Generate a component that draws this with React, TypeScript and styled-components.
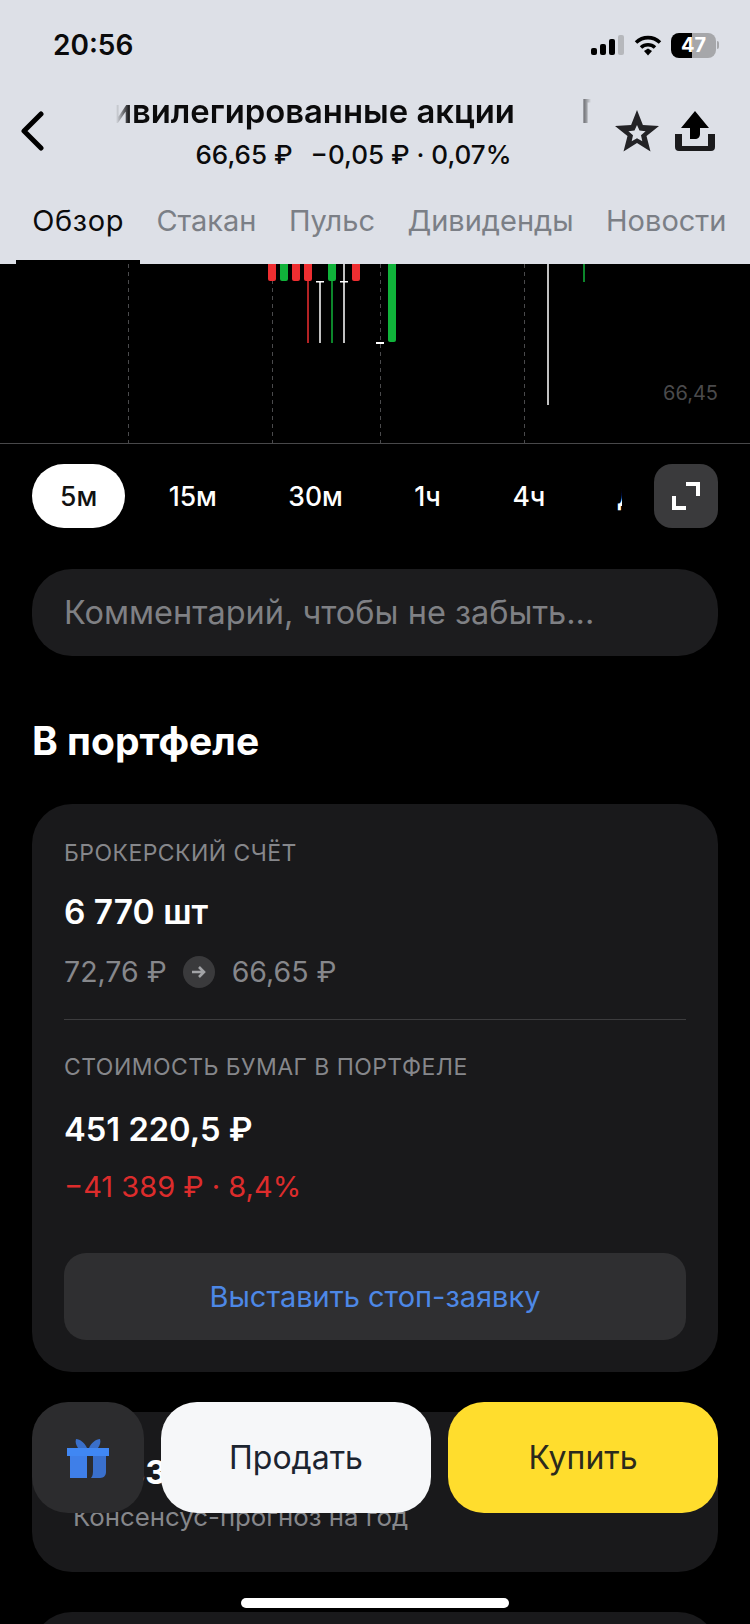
import React, { FC } from "react";
import styled, { createGlobalStyle } from "styled-components";

const GlobalStyle = createGlobalStyle`
	html, body {
		margin: 0;
		padding: 0;
		background: #000;
	}
	* {
		box-sizing: border-box;
	}
`;

const Page = styled.div`
	position: relative;
	width: 750px;
	height: 1624px;
	overflow: hidden;
	background: #000;
	font-family: Inter, "Noto Sans", sans-serif;
	color: #fff;
`;

// header
const Header = styled.header`
	height: 264px;
	background: #dde0e7;
	color: #0b0b0c;
`;

const StatusBar = styled.div`
	height: 90px;
	display: flex;
	align-items: center;
	justify-content: space-between;
	padding: 0 31px 0 53px;
`;

const Time = styled.span`
	font-size: 28px;
	font-weight: 600;
`;

const StatusIcons = styled.div`
	display: flex;
	align-items: center;
	gap: 9px;
`;

const BatteryWrap = styled.div`
	display: flex;
	align-items: center;
	gap: 1px;
`;

const Battery = styled.div`
	width: 45px;
	height: 25px;
	border-radius: 8px;
	overflow: hidden;
	background: linear-gradient(90deg, #000 0 47%, #a6a7aa 47% 100%);
	color: #fff;
	font-size: 20px;
	font-weight: 700;
	line-height: 25px;
	text-align: center;
`;

const BatteryNub = styled.span`
	width: 2px;
	height: 8px;
	border-radius: 0 2px 2px 0;
	background: #a6a7aa;
`;

const NavRow = styled.div`
	height: 82px;
	display: flex;
	align-items: center;
	padding-left: 20px;
`;

const TitleBlock = styled.div`
	width: 475px;
	margin: 0 24px 0 72px;
	display: flex;
	flex-direction: column;
	align-items: center;
`;

const TitleClip = styled.div`
	width: 100%;
	height: 40px;
	overflow: hidden;
	-webkit-mask-image: linear-gradient(90deg, transparent 0, #000 14px, #000 calc(100% - 14px), transparent 100%);
	mask-image: linear-gradient(90deg, transparent 0, #000 14px, #000 calc(100% - 14px), transparent 100%);
`;

const TitleTrack = styled.div`
	display: flex;
	gap: 66px;
	margin-left: -49px;
	white-space: nowrap;
	font-size: 32.8px;
	font-weight: 600;
	line-height: 40px;
`;

const Subtitle = styled.div`
	margin-top: 8px;
	display: flex;
	gap: 18px;
	font-size: 26px;
	font-weight: 500;
	line-height: 32px;
	white-space: nowrap;
`;

const NavActions = styled.div`
	display: flex;
	align-items: center;
	gap: 16px;
`;

const Tabs = styled.nav`
	display: flex;
	padding-left: 16px;
	white-space: nowrap;
`;

const Tab = styled.div<{ $active?: boolean }>`
	padding: 32px 16.2px 22px;
	font-size: 29px;
	line-height: 34px;
	letter-spacing: ${(p) => (p.$active ? "0.6px" : "0")};
	color: ${(p) => (p.$active ? "#0b0b0c" : "#7b7f86")};
	border-bottom: 4px solid ${(p) => (p.$active ? "#000" : "transparent")};
`;

// chart
const ChartWrap = styled.section`
	position: relative;
	height: 180px;
	border-bottom: 1px solid #48484a;
`;

const ChartLabel = styled.span`
	position: absolute;
	right: 32px;
	top: 116px;
	font-size: 20px;
	line-height: 26px;
	color: #4a4a4c;
`;

// timeframes
const FrameRow = styled.div`
	display: flex;
	align-items: center;
	margin-top: 20px;
	padding: 0 32px;
	gap: 32px;
`;

const FrameScroll = styled.div`
	width: 590px;
	display: flex;
	gap: 15.5px;
	overflow: hidden;
`;

const FramePill = styled.div<{ $active?: boolean }>`
	flex: none;
	height: 64px;
	padding: 0 28px;
	border-radius: 32px;
	display: flex;
	align-items: center;
	font-size: 26.5px;
	font-weight: 500;
	color: ${(p) => (p.$active ? "#111" : "#fff")};
	background: ${(p) => (p.$active ? "#fff" : "transparent")};
`;

const ExpandButton = styled.div`
	flex: none;
	width: 64px;
	height: 64px;
	border-radius: 18px;
	background: #3a3a3c;
	display: flex;
	align-items: center;
	justify-content: center;
`;

// comment
const Comment = styled.div`
	margin: 41px 32px 0;
	height: 87px;
	padding: 0 32px;
	border-radius: 40px;
	background: #1c1c1e;
	display: flex;
	align-items: center;
	font-size: 32.5px;
	color: #7f8084;
	white-space: nowrap;
`;

const SectionTitle = styled.h2`
	margin: 59px 32px 0;
	font-size: 39px;
	font-weight: 700;
	line-height: 52px;
`;

// cards
const Card = styled.section`
	margin: 37px 32px 0;
	padding: 34px 32px 32px;
	border-radius: 40px;
	background: #19191b;
`;

const CardLabel = styled.div<{ $gap?: number }>`
	margin-top: ${(p) => p.$gap ?? 0}px;
	font-size: 23px;
	line-height: 30px;
	letter-spacing: 0.45px;
	color: #86878b;
`;

const Amount = styled.div<{ $gap: number; $size: number }>`
	margin-top: ${(p) => p.$gap}px;
	font-size: ${(p) => p.$size}px;
	font-weight: 600;
	line-height: 40px;
`;

const PriceRow = styled.div`
	margin-top: 24px;
	display: flex;
	align-items: center;
	font-size: 28.5px;
	line-height: 32px;
	color: #86878b;
`;

const ArrowDot = styled.span`
	width: 32px;
	height: 32px;
	margin: 0 17px 0 16px;
	border-radius: 50%;
	background: #3a3a3c;
	display: flex;
	align-items: center;
	justify-content: center;
`;

const Divider = styled.div`
	margin-top: 31px;
	height: 1px;
	background: #3c3c3e;
`;

const Loss = styled.div`
	margin-top: 20px;
	font-size: 29px;
	line-height: 36px;
	color: #dd2c2c;
`;

const StopButton = styled.div`
	margin-top: 48px;
	height: 87px;
	border-radius: 22px;
	background: #2f2f31;
	display: flex;
	align-items: center;
	justify-content: center;
	font-size: 29px;
	color: #4d88e6;
`;

const ForecastCard = styled.section`
	margin: 40px 32px 0;
	height: 160px;
	padding: 40px 41px 0;
	border-radius: 40px;
	background: #19191b;
`;

const ForecastValue = styled.div`
	font-size: 33px;
	font-weight: 700;
	line-height: 40px;
`;

const ForecastHint = styled.div`
	margin-top: 9px;
	font-size: 25.8px;
	line-height: 32px;
	color: #86878b;
`;

const NextCard = styled.section`
	margin: 40px 32px 0;
	height: 160px;
	border-radius: 40px;
	background: #19191b;
`;

// overlays
const ActionBar = styled.div`
	position: absolute;
	left: 32px;
	right: 32px;
	top: 1402px;
	display: grid;
	grid-template-columns: 112px 270px 270px;
	column-gap: 17px;
`;

const GiftButton = styled.div`
	height: 111px;
	border-radius: 36px;
	background: #2c2c2e;
	display: flex;
	align-items: center;
	justify-content: center;
`;

const ActionButton = styled.div<{ $bg: string; $ink: string }>`
	height: 111px;
	border-radius: 36px;
	background: ${(p) => p.$bg};
	color: ${(p) => p.$ink};
	display: flex;
	align-items: center;
	justify-content: center;
	font-size: 32px;
`;

const HomeBar = styled.div`
	position: absolute;
	left: 241px;
	top: 1598px;
	width: 268px;
	height: 10px;
	border-radius: 5px;
	background: #fff;
`;

// candles: x, height, colour
const bodies: [number, number, string][] = [
	[272, 17, "#ee2e31"],
	[284, 17, "#10b33a"],
	[296, 17, "#ee2e31"],
	[308, 17, "#ee2e31"],
	[332, 17, "#10b33a"],
	[356, 17, "#ee2e31"],
	[392, 78, "#10b33a"],
];

const wicks: [number, number, number, string][] = [
	[308, 17, 79, "#ee2e31"],
	[320, 17, 79, "#fff"],
	[332, 17, 79, "#10b33a"],
	[344, 0, 79, "#fff"],
	[548, 0, 141, "#fff"],
	[584, 0, 18, "#10b33a"],
];

const Chart: FC = () => (
	<svg width="750" height="179" viewBox="0 0 750 179" style={{ display: "block" }}>
		{[128, 272, 380, 524].map((x) => (
			<line key={x} x1={x + 0.5} x2={x + 0.5} y1="0" y2="179" stroke="#4a4a4c" strokeWidth="1" strokeDasharray="4 4" />
		))}
		{wicks.map(([x, y1, y2, c]) => (
			<rect key={`${x}-${c}`} x={x - 0.75} y={y1} width="1.5" height={y2 - y1} fill={c} />
		))}
		{bodies.map(([x, h, c]) => (
			<path key={x} d={`M${x - 4} -4h8v${h + 2}a2 2 0 0 1-2 2h-4a2 2 0 0 1-2-2z`} fill={c} />
		))}
		<rect x="316" y="17" width="8" height="1.5" fill="#fff" />
		<rect x="340" y="17" width="8" height="1.5" fill="#fff" />
		<rect x="376" y="78" width="8" height="2" fill="#fff" />
	</svg>
);

const SignalIcon: FC = () => (
	<svg width="34" height="20" viewBox="0 0 34 20">
		<rect x="0" y="13" width="6" height="7" rx="2" fill="#000" />
		<rect x="9" y="9" width="6" height="11" rx="2" fill="#000" />
		<rect x="18" y="4" width="6" height="16" rx="2" fill="#000" />
		<rect x="27" y="0" width="6" height="20" rx="2" fill="#b6b8bc" />
	</svg>
);

const WifiIcon: FC = () => (
	<svg width="28" height="21" viewBox="0 0 28 21" fill="none">
		<path d="M2 7.5c7-6.5 17-6.5 24 0" stroke="#000" strokeWidth="3.6" />
		<path d="M7 12.5c4-3.6 10-3.6 14 0" stroke="#000" strokeWidth="3.6" />
		<path d="M10 16l4-2.6 4 2.6-4 4.6z" fill="#000" />
	</svg>
);

const App: FC = () => {
	return (
		<Page>
			<GlobalStyle />
			<Header>
				<StatusBar>
					<Time>20:56</Time>
					<StatusIcons>
						<SignalIcon />
						<WifiIcon />
						<BatteryWrap>
							<Battery>47</Battery>
							<BatteryNub />
						</BatteryWrap>
					</StatusIcons>
				</StatusBar>
				<NavRow>
					<svg width="24" height="40" viewBox="0 0 24 40" fill="none">
						<path d="M21 3L4 20l17 17" stroke="#000" strokeWidth="5" strokeLinecap="round" strokeLinejoin="round" />
					</svg>
					<TitleBlock>
						<TitleClip>
							<TitleTrack>
								<span>Привилегированные акции</span>
								<span>Привилегированные акции</span>
							</TitleTrack>
						</TitleClip>
						<Subtitle>
							<span>66,65 ₽</span>
							<span>−0,05 ₽ · 0,07%</span>
						</Subtitle>
					</TitleBlock>
					<NavActions>
						<svg width="44" height="42" viewBox="0 0 44 42">
							<path
								fillRule="evenodd"
								d="M22 0L27.900 14.900 44 15.900 31.500 26.100 35.500 41.600 22 33 8.500 41.600 12.500 26.100 0 15.900 16.100 14.900zM22 15L19.500 20.600 13.400 21.200 18 25.300 16.700 31.300 22 28.200 27.300 31.300 26 25.300 30.600 21.200 24.500 20.600z"
								fill="#232326"
							/>
						</svg>
						<svg width="40" height="40" viewBox="0 0 40 40">
							<path d="M20 0l14 17h-9v6c0 3-2 5-5 5h-5V17H6z" fill="#000" />
							<path d="M0 23h7v12h26V23h7v13a4 4 0 0 1-4 4H4a4 4 0 0 1-4-4z" fill="#1b1b1d" />
						</svg>
					</NavActions>
				</NavRow>
				<Tabs>
					<Tab $active>Обзор</Tab>
					<Tab>Стакан</Tab>
					<Tab>Пульс</Tab>
					<Tab>Дивиденды</Tab>
					<Tab>Новости</Tab>
				</Tabs>
			</Header>

			<ChartWrap>
				<Chart />
				<ChartLabel>66,45</ChartLabel>
			</ChartWrap>

			<FrameRow>
				<FrameScroll>
					<FramePill $active>5м</FramePill>
					<FramePill>15м</FramePill>
					<FramePill>30м</FramePill>
					<FramePill>1ч</FramePill>
					<FramePill>4ч</FramePill>
					<FramePill>Д</FramePill>
				</FrameScroll>
				<ExpandButton>
					<svg width="28" height="28" viewBox="0 0 28 28" fill="none">
						<path d="M14 2h12v12M2 14v12h12" stroke="#fff" strokeWidth="4" />
					</svg>
				</ExpandButton>
			</FrameRow>

			<Comment>Комментарий, чтобы не забыть...</Comment>

			<SectionTitle>В портфеле</SectionTitle>

			<Card>
				<CardLabel>БРОКЕРСКИЙ СЧЁТ</CardLabel>
				<Amount $gap={24} $size={33.5}>6 770 шт</Amount>
				<PriceRow>
					72,76 ₽
					<ArrowDot>
						<svg width="16" height="14" viewBox="0 0 16 14" fill="none">
							<path d="M1 7h12M8 2l5 5-5 5" stroke="#a2a3a6" strokeWidth="2.600" />
						</svg>
					</ArrowDot>
					66,65 ₽
				</PriceRow>
				<Divider />
				<CardLabel $gap={32}>СТОИМОСТЬ БУМАГ В ПОРТФЕЛЕ</CardLabel>
				<Amount $gap={27} $size={32.7}>451 220,5 ₽</Amount>
				<Loss>−41 389 ₽ · 8,4%</Loss>
				<StopButton>Выставить стоп-заявку</StopButton>
			</Card>

			<ForecastCard>
				<ForecastValue>2 083 ₽</ForecastValue>
				<ForecastHint>Консенсус-прогноз на год</ForecastHint>
			</ForecastCard>
			<NextCard />

			<ActionBar>
				<GiftButton>
					<svg width="42" height="40" viewBox="0 0 42 40">
						<path d="M9 1c4 0 9 4 11 9H11C9 7 8 4 9 1zM33 1c-4 0-9 4-11 9h9c2-3 3-6 2-9z" fill="#3a6fc9" />
						<rect x="0" y="10" width="42" height="8" fill="#4087f3" />
						<rect x="3" y="18" width="17" height="22" fill="#3f7fe8" />
						<path d="M20 18h19v16c0 3-2 6-6 6h-9c2-2 2-5 2-9V18z" fill="#3a70cc" />
					</svg>
				</GiftButton>
				<ActionButton $bg="#f6f7f9" $ink="#1c2430">Продать</ActionButton>
				<ActionButton $bg="#ffdd2d" $ink="#2b2a1c">Купить</ActionButton>
			</ActionBar>
			<HomeBar />
		</Page>
	);
};

export default App;
